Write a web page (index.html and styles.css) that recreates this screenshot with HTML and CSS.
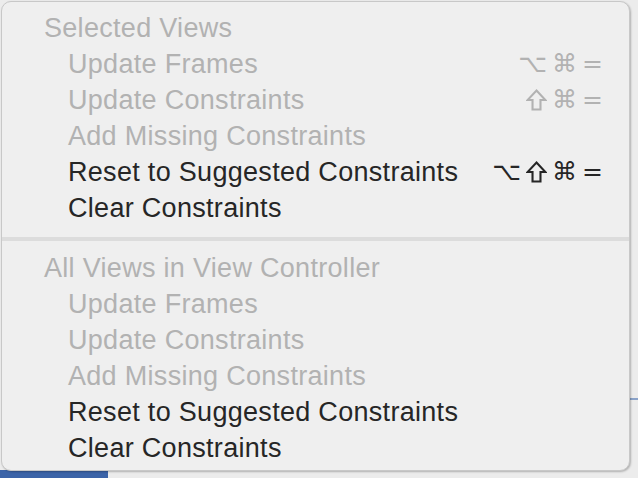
FILE: index.html
```html
<!DOCTYPE html>
<html>
<head>
<meta charset="utf-8">
<link rel="stylesheet" href="styles.css">
</head>
<body>
<div class="backdrop">
  <div class="bg-blue"></div>
  <div class="bg-line"></div>
</div>
<div class="menu">
  <div class="section">
    <div class="row header">Selected Views</div>
    <div class="row item disabled"><span>Update Frames</span><span class="key"><span>⌥</span><span>⌘</span><span>=</span></span></div>
    <div class="row item disabled"><span>Update Constraints</span><span class="key"><svg class="shift" viewBox="0 0 20 21"><path d="M10 1.5 L18.5 10.5 H13.8 V19.5 H6.2 V10.5 H1.5 Z"/></svg><span>⌘</span><span>=</span></span></div>
    <div class="row item disabled"><span>Add Missing Constraints</span></div>
    <div class="row item"><span>Reset to Suggested Constraints</span><span class="key"><span>⌥</span><svg class="shift" viewBox="0 0 20 21"><path d="M10 1.5 L18.5 10.5 H13.8 V19.5 H6.2 V10.5 H1.5 Z"/></svg><span>⌘</span><span>=</span></span></div>
    <div class="row item"><span>Clear Constraints</span></div>
  </div>
  <div class="sep"></div>
  <div class="section">
    <div class="row header">All Views in View Controller</div>
    <div class="row item disabled"><span>Update Frames</span></div>
    <div class="row item disabled"><span>Update Constraints</span></div>
    <div class="row item disabled"><span>Add Missing Constraints</span></div>
    <div class="row item"><span>Reset to Suggested Constraints</span></div>
    <div class="row item"><span>Clear Constraints</span></div>
  </div>
</div>
</body>
</html>
```
FILE: styles.css
```css
html, body {
  margin: 0;
  padding: 0;
  width: 638px;
  height: 478px;
  overflow: hidden;
}
body {
  background: #ececec;
  font-family: "Liberation Sans", Arial, sans-serif;
  position: relative;
}
.backdrop .bg-blue {
  position: absolute;
  left: 0;
  top: 470px;
  width: 108px;
  height: 8px;
  background: #3c64a8;
}
.backdrop .bg-line {
  position: absolute;
  left: 628px;
  top: 398px;
  width: 10px;
  height: 2px;
  background: #8aa2c8;
}
.menu {
  position: absolute;
  left: 1px;
  top: 1px;
  width: 629px;
  height: 470px;
  box-sizing: border-box;
  background: #efefef;
  border: 1px solid #c8c8c8;
  border-radius: 10px;
  box-shadow: 1px 1px 2px rgba(0,0,0,0.25);
  padding-top: 8px;
  display: flex;
  flex-direction: column;
}
.row {
  height: 36px;
  line-height: 36px;
  font-size: 27px;
  letter-spacing: 0.3px;
  white-space: nowrap;
}
.header {
  padding-left: 42px;
  color: #b2b2b2;
}
.item {
  padding-left: 66px;
  padding-right: 26px;
  color: #262626;
  display: flex;
  justify-content: space-between;
}
.item.disabled {
  color: #b2b2b2;
}
.key {
  font-family: "DejaVu Sans", sans-serif;
  font-size: 25px;
  letter-spacing: 0;
  display: flex;
  align-items: center;
  gap: 5px;
}
.shift {
  flex-shrink: 0;
  width: 21px;
  height: 22px;
  fill: none;
  stroke: currentColor;
  stroke-width: 2;
  stroke-linejoin: miter;
}
.sep {
  height: 4px;
  background: #dcdcdc;
  margin: 11px 0 9px;
}
```
